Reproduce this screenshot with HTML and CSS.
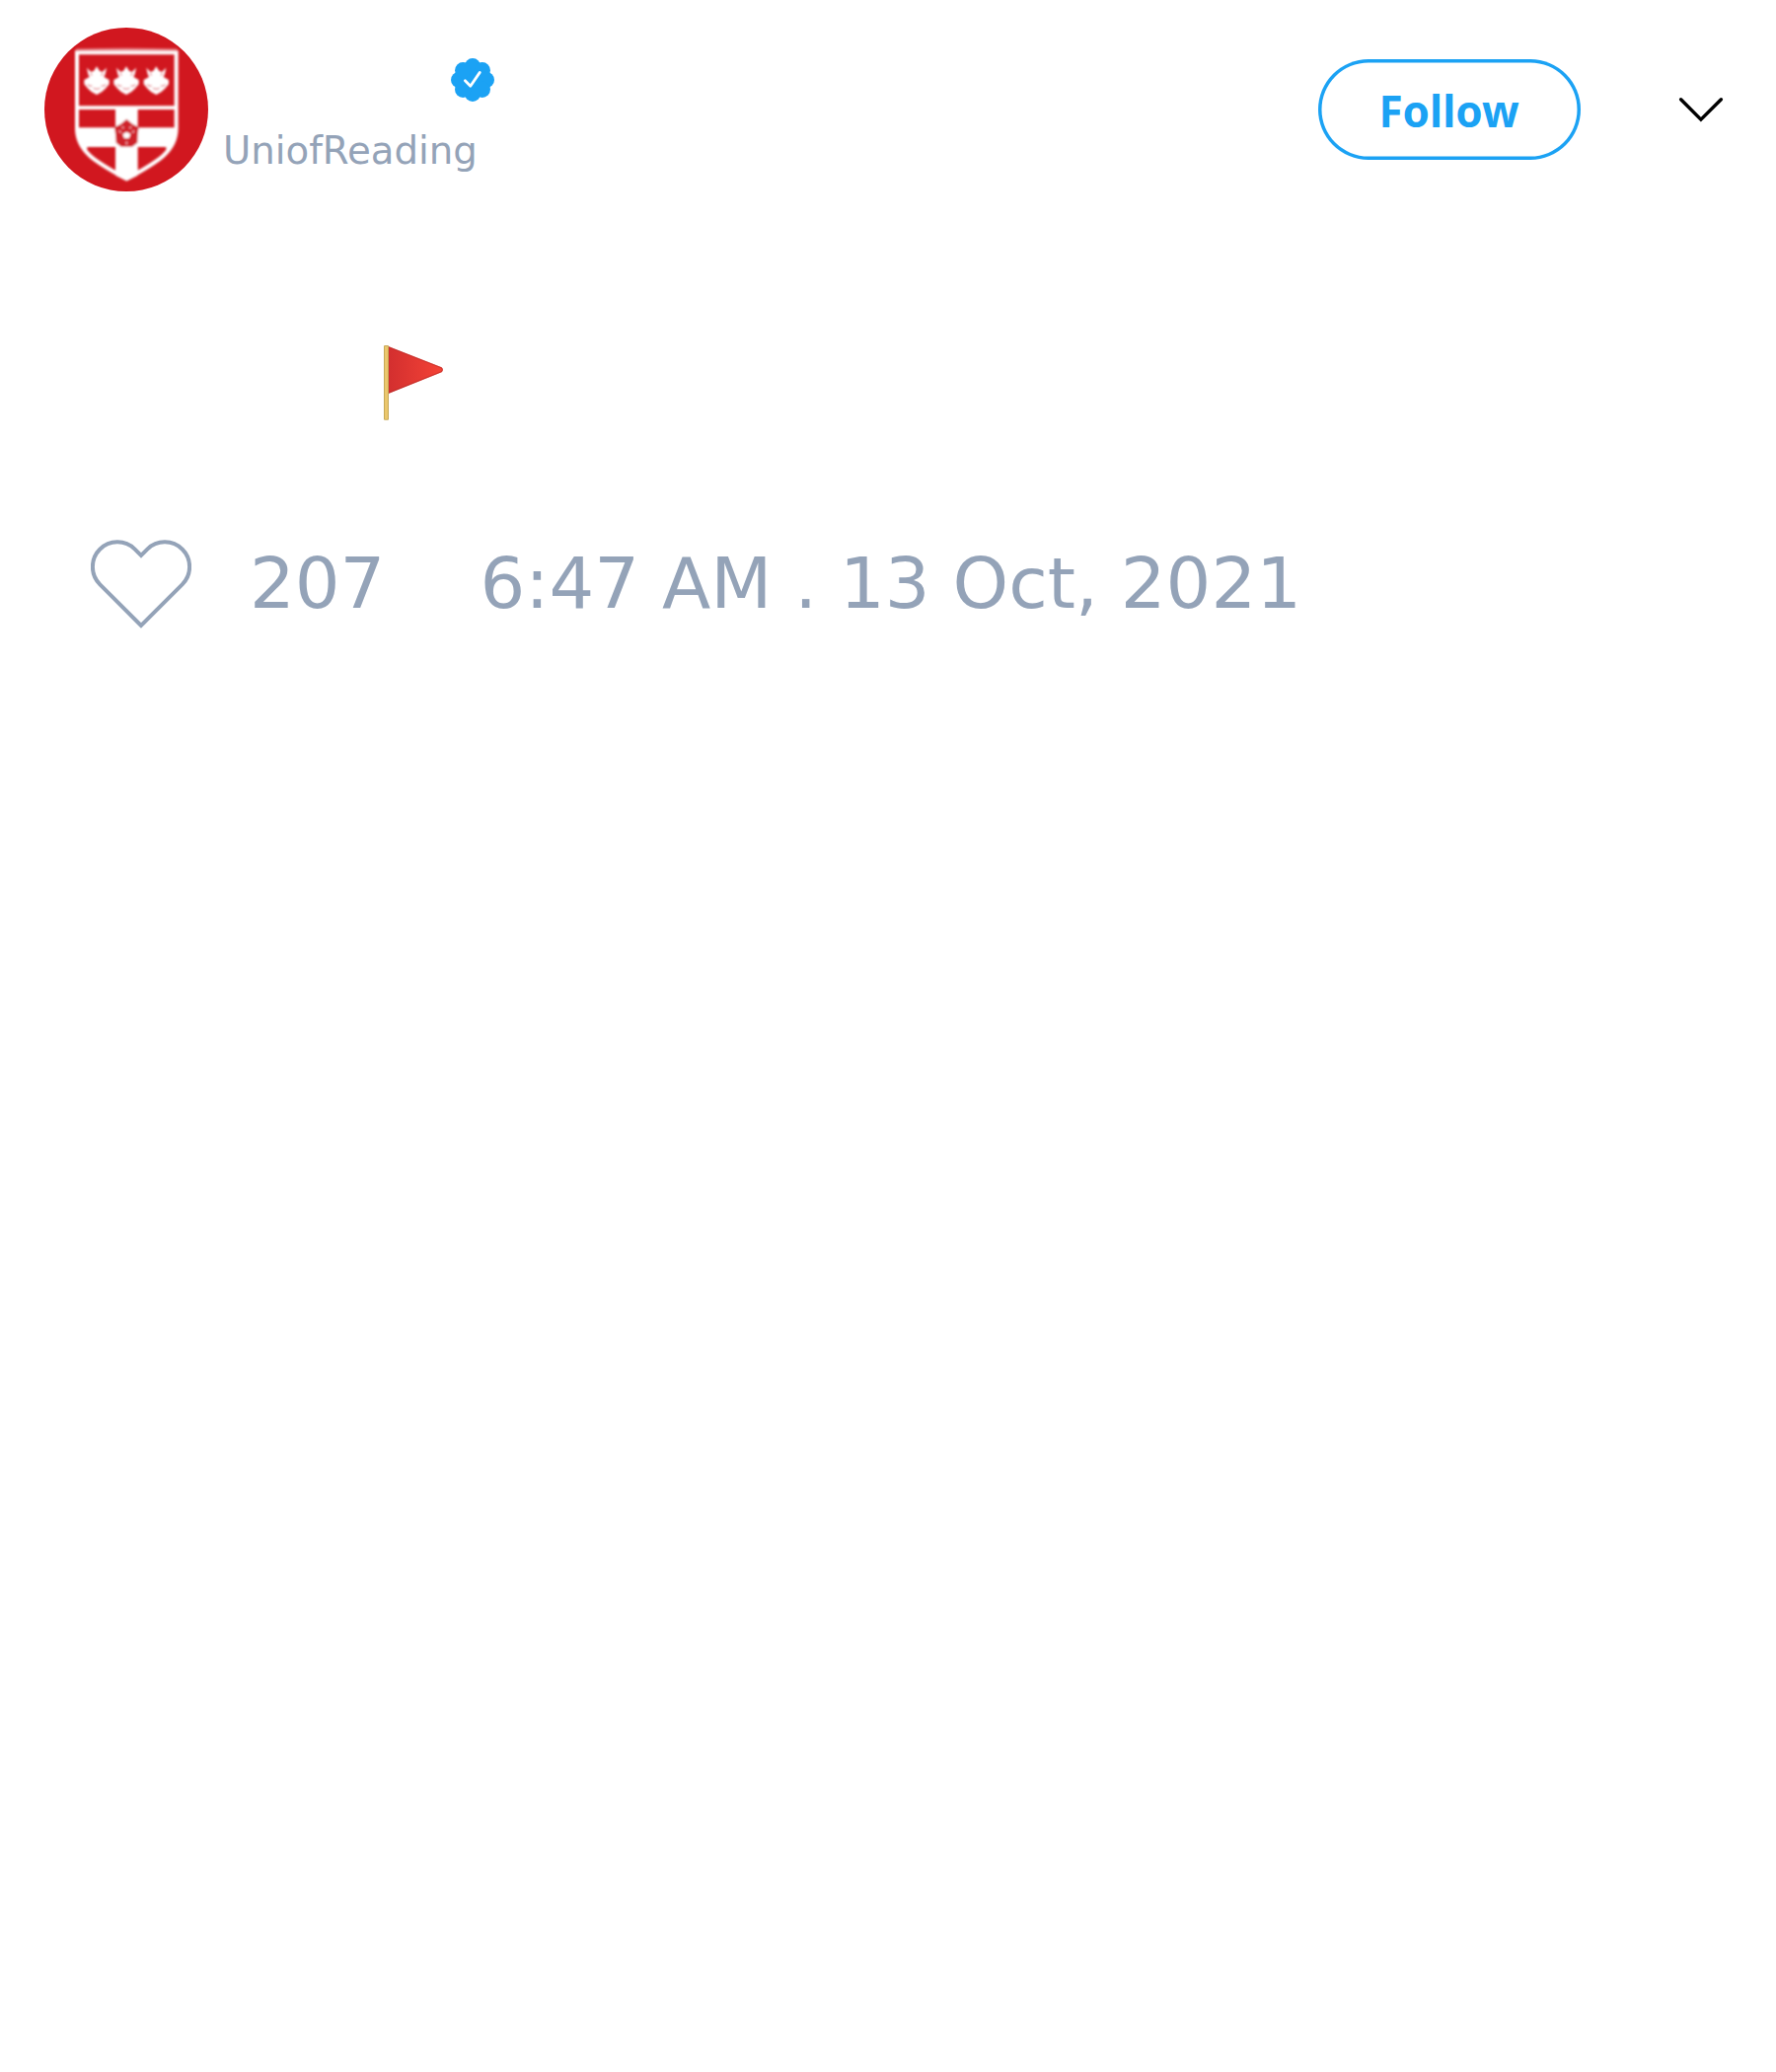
FILE: index.html
```
<!DOCTYPE html>
<html lang="en">
<head>
<meta charset="utf-8">
<title>UniofReading</title>
<link rel="stylesheet" href="styles.css">
</head>
<body>
<article class="tweet">
  <header class="header">
    <svg class="avatar" viewBox="15 24 498 498">
      <defs>
        <filter id="soft"><feGaussianBlur stdDeviation="3.2"/></filter>
        <clipPath id="shield"><path d="M114 98H416V330C416 400 360 432 265 486C170 432 114 400 114 330Z"/></clipPath>
        <g id="shell">
          <path d="M0-46L9-32L18-30L30-42L26-22L22-14L38-5L38 8L26 22L15 32L0 40L-15 32L-26 22L-38 8L-38-5L-22-14L-26-22L-30-42L-18-30L-9-32Z" fill="#fff"/>
          <path d="M-28 9Q-20 17-14 12M28 9Q20 17 14 12M-10 20Q0 26 10 20M-18-27L-15-18M18-27L15-18" fill="none" stroke="#e2717a" stroke-width="3.5"/>
        </g>
      </defs>
      <circle cx="264" cy="273" r="249" fill="#d1171f"/>
      <g filter="url(#soft)">
        <g clip-path="url(#shield)" fill="#fff">
          <path d="M114 262H416V273H114Z"/>
          <path d="M114 328H416V387H114Z"/>
          <path d="M231 268H299V490H231Z"/>
        </g>
        <path d="M114 100H416V330C416 400 360 432 265 484C170 432 114 400 114 330Z" fill="none" stroke="#fff" stroke-width="12"/>
        <path d="M112 92Q265 88 418 92" fill="none" stroke="#e8858b" stroke-width="7"/>
        <path d="M112 328L112 350L145 402V386ZM418 328L418 350L385 402V386ZM232 450V474L265 490L298 474V450Z" fill="#fff"/>
        <use href="#shell" x="174" y="188"/>
        <use href="#shell" x="264" y="188"/>
        <use href="#shell" x="355" y="188"/>
        <path d="M265 302L284 318L302 326L299 348L298 374L282 386H248L233 374L231 348L228 326L246 318Z" fill="#cf202a"/>
        <path d="M265 341L277 348L272 360H258L253 348Z" fill="#fff"/>
        <path d="M241 338L249 343M289 338L281 343M265 370V380M251 325L256 331M279 325L274 331" stroke="#f0a0a6" stroke-width="5"/>
      </g>
    </svg>
    <div class="identity">
      <div class="name-row">
        <svg class="badge" viewBox="-22 -22 44 44">
          <g fill="#1ba2f4">
            <circle r="17"/>
            <circle cx="0" cy="-13.8" r="8.2"/><circle cx="9.76" cy="-9.76" r="8.2"/>
            <circle cx="13.8" cy="0" r="8.2"/><circle cx="9.76" cy="9.76" r="8.2"/>
            <circle cx="0" cy="13.8" r="8.2"/><circle cx="-9.76" cy="9.76" r="8.2"/>
            <circle cx="-13.8" cy="0" r="8.2"/><circle cx="-9.76" cy="-9.76" r="8.2"/>
          </g>
          <path d="M-7.6 .8L-2.2 6.2L7.3-7.6" fill="none" stroke="#fff" stroke-width="2.8" stroke-linecap="round" stroke-linejoin="round"/>
        </svg>
      </div>
      <div class="handle">UniofReading</div>
    </div>
    <button class="follow">Follow</button>
    <svg class="chevron" viewBox="0 0 48 28">
      <path d="M3.6 3.8L23.9 24.2L44.4 3.8" fill="none" stroke="#000" stroke-width="3.4" stroke-linecap="round"/>
    </svg>
  </header>

  <div class="content">
    <svg class="flag" viewBox="0 0 62 76">
      <defs>
        <linearGradient id="cloth"><stop offset="0" stop-color="#d32f2f"/><stop offset="1" stop-color="#f44336"/></linearGradient>
      </defs>
      <path d="M5 1.2L58.5 22.2Q61.2 24.8 58.5 27.3L5 48.8Z" fill="url(#cloth)"/>
      <path d="M5 1.8L58.3 22.8Q60.5 24.8 58.3 26.7L5 48.1" fill="none" stroke="#b52b28" stroke-opacity=".55" stroke-width="1.2"/>
      <rect x="0" y="0" width="5" height="75.8" rx="1" fill="#c7a958"/>
      <rect x="1" y="1" width="3" height="73.8" fill="#ebc76c"/>
    </svg>
  </div>

  <footer class="footer">
    <svg class="heart" viewBox="0 0 102 92">
      <path d="M51 87L9.32 45.3A25 25 0 0 1 44.68 9.6L51 16L57.32 9.6A25 25 0 0 1 92.68 45.3Z" fill="none" stroke="#94a3b8" stroke-width="4"/>
    </svg>
    <span class="likes">207</span>
    <span class="date">6:47 AM . 13 Oct, 2021</span>
  </footer>
</article>
</body>
</html>
```
FILE: styles.css
```
body {
  margin: 0;
  background: #fff;
}

.tweet {
  width: 1800px;
  height: 2100px;
  overflow: hidden;
  color: #94a3b8;
  font-family: "DejaVu Sans", sans-serif;
}

svg {
  display: block;
  flex: none;
}

.header {
  display: flex;
  align-items: center;
  box-sizing: border-box;
  height: 222px;
  padding: 0 52px 0 45px;
}

.avatar {
  width: 166px;
  height: 166px;
}

.identity {
  width: 300px;
  height: 166px;
  margin-left: 14px;
}

.name-row {
  display: flex;
  justify-content: flex-end;
  padding: 31px 24px 0 0;
}

.badge {
  width: 44px;
  height: 44px;
}

.handle {
  margin: 26px 0 0 1px;
  font-size: 38.7px;
  line-height: 48px;
}

.follow {
  width: 266px;
  height: 102px;
  margin-left: auto;
  padding: 2px 1px 0 0;
  border: 0;
  border-radius: 51px;
  box-shadow: inset 0 0 0 3.5px #1ba2f4;
  background: transparent;
  color: #1ba2f4;
  font: bold 44px/100px "Noto Sans", sans-serif;
}

.chevron {
  width: 48px;
  height: 28px;
  margin-left: 98px;
}

.content {
  display: flex;
  box-sizing: border-box;
  height: 325px;
  padding: 128px 0 0 389px;
}

.flag {
  width: 62px;
  height: 76px;
}

.footer {
  display: flex;
  align-items: flex-start;
  height: 92px;
  padding-left: 92px;
  font-size: 72px;
  line-height: 88px;
  white-space: nowrap;
}

.heart {
  width: 102px;
  height: 92px;
}

.likes {
  margin-left: 59px;
}

.date {
  margin-left: 96px;
}
```
